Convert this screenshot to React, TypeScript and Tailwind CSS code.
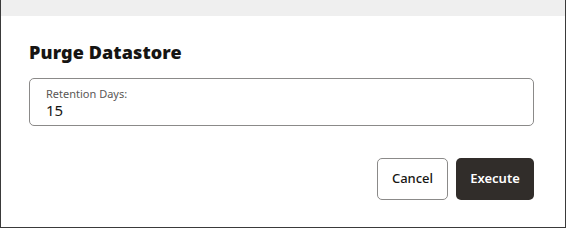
import React from "react";

export default function App() {
  return (
    <div
      className="w-[566px] h-[228px] bg-white border-x border-b border-[#3a3a3a] flex flex-col overflow-hidden"
      style={{ fontFamily: '"Noto Sans", "Open Sans", sans-serif' }}
    >
      <div className="h-[16px] bg-[#efefef] shrink-0" />
      <div className="flex flex-col pl-[28px] pr-[31px]">
        <h1 className="mt-[24px] text-[18px] leading-[24px] font-black text-[#161513] tracking-[0.1px]">
          Purge Datastore
        </h1>
        <div className="mt-[14px] h-[48px] border border-[#8b8a89] rounded-[5px] pl-[16px] pt-[8px] flex flex-col">
          <span className="text-[11px] leading-[14px] text-[#5a5755]">Retention Days:</span>
          <span className="text-[15px] leading-[18px] text-[#161513]">15</span>
        </div>
        <div className="mt-[32px] flex justify-end gap-[8px]">
          <button className="w-[71px] h-[42px] border border-[#8b8a89] rounded-[5px] bg-white text-[13px] font-medium text-[#161513]">
            Cancel
          </button>
          <button className="w-[78px] h-[42px] rounded-[5px] bg-[#312d2a] text-[13px] font-semibold text-white">
            Execute
          </button>
        </div>
      </div>
    </div>
  );
}
